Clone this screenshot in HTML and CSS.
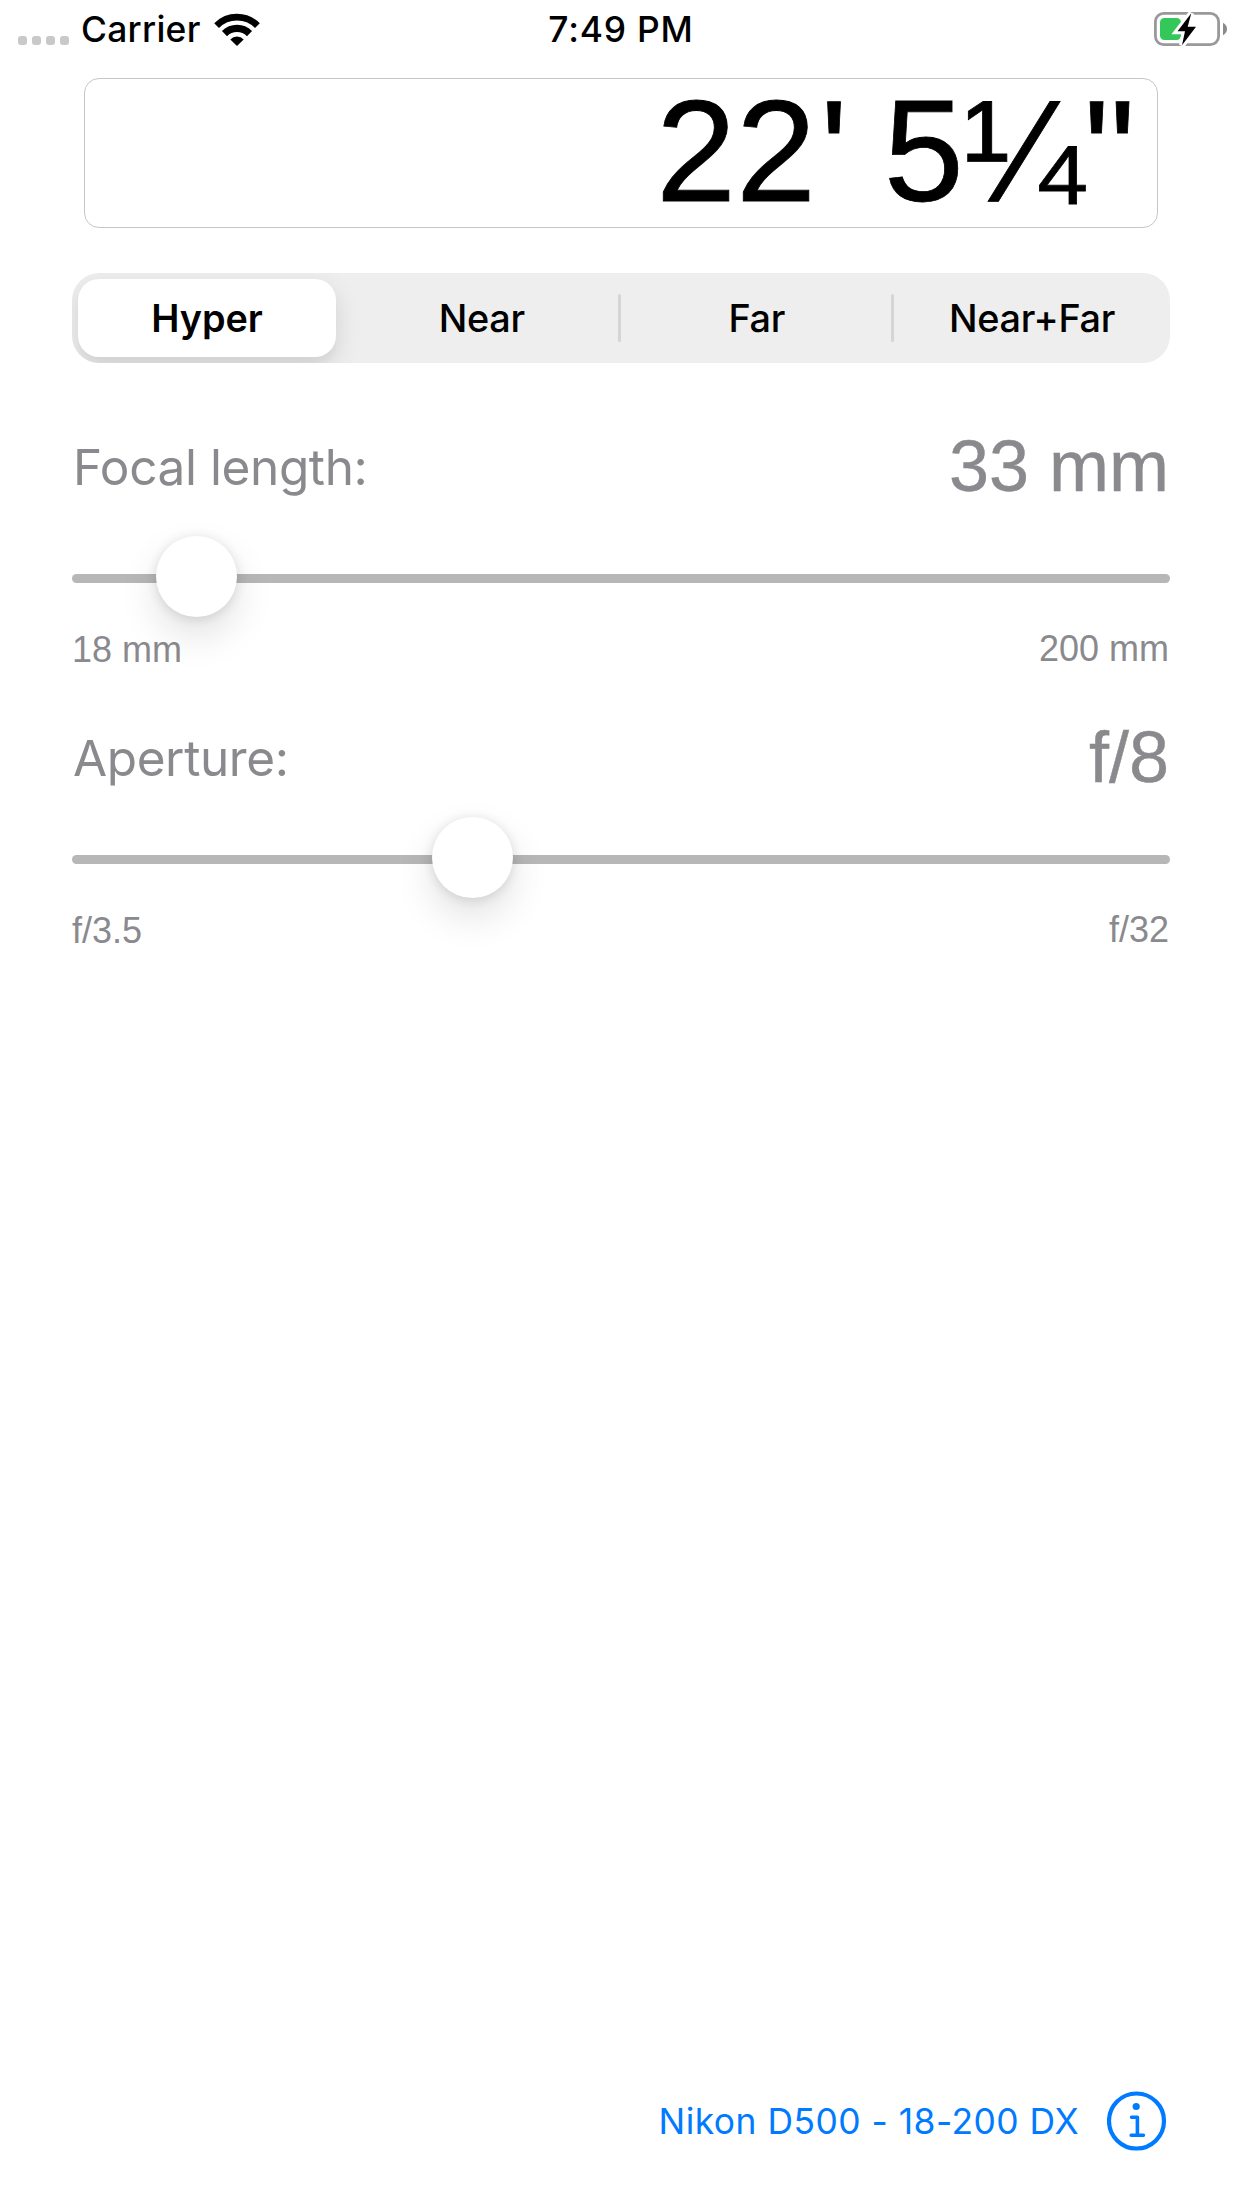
FILE: index.html
```html
<!DOCTYPE html>
<html lang="en">
<head>
<meta charset="utf-8">
<title>Depth of Field</title>
<link rel="stylesheet" href="styles.css">
</head>
<body>
<div class="screen">
  <header class="status">
    <div class="status-left">
      <span class="signal"><i></i><i></i><i></i><i></i></span>
      <span class="carrier">Carrier</span>
      <svg class="wifi" width="48" height="36" viewBox="0 0 48 36">
        <g fill="none" stroke="#000">
          <path stroke-width="6.7" d="M3.6 13.6A28.9 28.9 0 0 1 44.4 13.6"/>
          <path stroke-width="7.2" d="M11.5 21.6A17.7 17.7 0 0 1 36.5 21.6"/>
        </g>
        <path d="M17.3 27.4A9.4 9.4 0 0 1 30.7 27.4L24 34Z"/>
      </svg>
    </div>
    <div class="clock">7:49 PM</div>
    <svg class="battery" width="76" height="36" viewBox="0 0 76 36">
      <rect x="1.4" y="1.4" width="63.2" height="31.2" rx="8.4" fill="none" stroke="#999" stroke-width="2.8"/>
      <path d="M69 10.8Q73 13 73 17T69 23.2Z" fill="#8a8a8a"/>
      <rect x="6" y="6" width="21" height="22" rx="4.5" fill="#34c759"/>
      <path d="M37.3 1.3L23.5 19.3H31L28 33.3L42 14.7H33.7Z" fill="#fff" stroke="#fff" stroke-width="6"/>
      <path d="M37.3 1.3L23.5 19.3H31L28 33.3L42 14.7H33.7Z"/>
    </svg>
  </header>

  <main>
    <output class="distance">22<span class="feet">'</span> 5¼"</output>

    <nav class="segments">
      <a class="segment selected"><span>Hyper</span></a>
      <a class="segment near">Near</a>
      <a class="segment divided">Far</a>
      <a class="segment divided last">Near+Far</a>
    </nav>

    <section class="setting focal">
      <div class="heading"><span class="label">Focal length:</span><span class="value">33 mm</span></div>
      <div class="slider"><div class="knob" style="left: 84px"></div></div>
      <div class="range"><span>18 mm</span><span class="max">200 mm</span></div>
    </section>

    <section class="setting aperture">
      <div class="heading"><span class="label">Aperture:</span><span class="value">f/8</span></div>
      <div class="slider"><div class="knob" style="left: 360px"></div></div>
      <div class="range"><span>f/3.5</span><span class="max">f/32</span></div>
    </section>
  </main>

  <footer class="camera">
    <span class="camera-name">Nikon D500 - 18-200 DX</span>
    <svg width="60" height="60" viewBox="0 0 60 60" fill="none" stroke="#007aff" stroke-linecap="round" stroke-linejoin="round">
      <circle cx="29.5" cy="30" r="27.5" stroke-width="4.2"/>
      <circle cx="29.2" cy="15.5" r="3.6" fill="#007aff" stroke="none"/>
      <path stroke-width="3.6" d="M24.6 26.2H30.4V44.3M24.2 44.3H36.4"/>
    </svg>
  </footer>
</div>
</body>
</html>
```

FILE: styles.css
```css
body {
  margin: 0;
  background: #fff;
  color: #000;
  font-family: Inter, sans-serif;
}

.screen {
  display: flex;
  flex-direction: column;
  box-sizing: border-box;
  height: 2208px;
  padding-bottom: 57px;
}

/* Status bar */
.status {
  display: grid;
  grid-template-columns: 1fr auto 1fr;
  height: 58px;
  padding: 0 12px 0 18px;
  font-size: 35.4px;
  font-weight: 450;
  line-height: 60px;
}

.status-left {
  display: flex;
}

.signal {
  display: flex;
  gap: 5px;
  margin: 36px 12px 0 0;
}

.signal i {
  width: 9px;
  height: 9px;
  border-radius: 3px;
  background: #c9c9c9;
}

.carrier {
  width: 118px;
  letter-spacing: 0.27px;
}

.wifi {
  margin: 12px 0 0 14px;
}

.clock {
  letter-spacing: 0.8px;
  margin-right: 6px;
}

.battery {
  justify-self: end;
  margin-top: 12px;
}

/* Result */
.distance {
  display: block;
  box-sizing: border-box;
  height: 150px;
  margin: 20px 84px 0;
  padding-right: 22px;
  border: 1px solid #c6c6c8;
  border-radius: 15px;
  font: 144px/146px "Liberation Sans", sans-serif;
  text-align: right;
  white-space: nowrap;
  -webkit-text-stroke: 0.8px #000;
}

.feet {
  margin: 0 -4px 0 4px;
}

/* Segmented control */
.segments {
  display: grid;
  grid-template-columns: repeat(4, 1fr);
  height: 90px;
  margin: 45px 72px 0;
  overflow: hidden;
  border-radius: 27px;
  background: #eee;
  font-size: 37.8px;
  font-weight: 450;
  letter-spacing: -0.3px;
  line-height: 90px;
  text-align: center;
}

.segment {
  display: block;
}

.near {
  padding-right: 4px;
}

.selected {
  margin: 6px 10.5px 6px 6px;
  border-radius: 21px;
  background: #fff;
  box-shadow: 0 9px 24px rgba(0, 0, 0, 0.12), 0 9px 3px rgba(0, 0, 0, 0.02);
  font-weight: 600;
  letter-spacing: 0;
  line-height: 78px;
}

.divided {
  display: flex;
  justify-content: center;
}

.divided::before {
  content: "";
  width: 3px;
  height: 48px;
  margin: 21px auto 0 -3px;
  border-radius: 2px;
  background: #d5d5d5;
}

.divided::after {
  content: "";
  width: 3px;
  margin-left: auto;
}

.last::before {
  margin-left: -4.5px;
}

.last::after {
  width: 0;
}

/* Sliders */
.setting {
  margin: 0 72px;
  color: #8a8a8e;
}

.focal {
  padding-top: 62px;
}

.aperture {
  padding-top: 47px;
}

.heading {
  display: flex;
  justify-content: space-between;
  height: 84px;
}

.label {
  margin-left: 1px;
  font-size: 49.5px;
  letter-spacing: -0.4px;
  line-height: 84px;
}

.value {
  margin-right: 1px;
  font: 72px/83px "Liberation Sans", sans-serif;
  -webkit-text-stroke: 0.4px #8a8a8e;
}

.slider {
  position: relative;
  height: 9px;
  margin: 65px 0 46px;
  border-radius: 4.5px;
  background: #b7b7b7;
}

.aperture .slider {
  margin-top: 55px;
}

.knob {
  position: absolute;
  top: -38px;
  width: 81px;
  height: 81px;
  border-radius: 50%;
  background: #fff;
  box-shadow: 0 1.5px 12px rgba(0, 0, 0, 0.12), 0 18px 39px rgba(0, 0, 0, 0.12);
}

.range {
  display: flex;
  justify-content: space-between;
  height: 40px;
  font: 36px/42px "Liberation Sans", sans-serif;
}

.range .max {
  margin-right: 1px;
  line-height: 40px;
}

/* Camera profile */
.camera {
  display: flex;
  justify-content: flex-end;
  gap: 28px;
  height: 60px;
  margin-top: auto;
  padding-right: 75px;
  color: #007aff;
  font-size: 35.4px;
  letter-spacing: 0.48px;
  line-height: 62px;
}
```
